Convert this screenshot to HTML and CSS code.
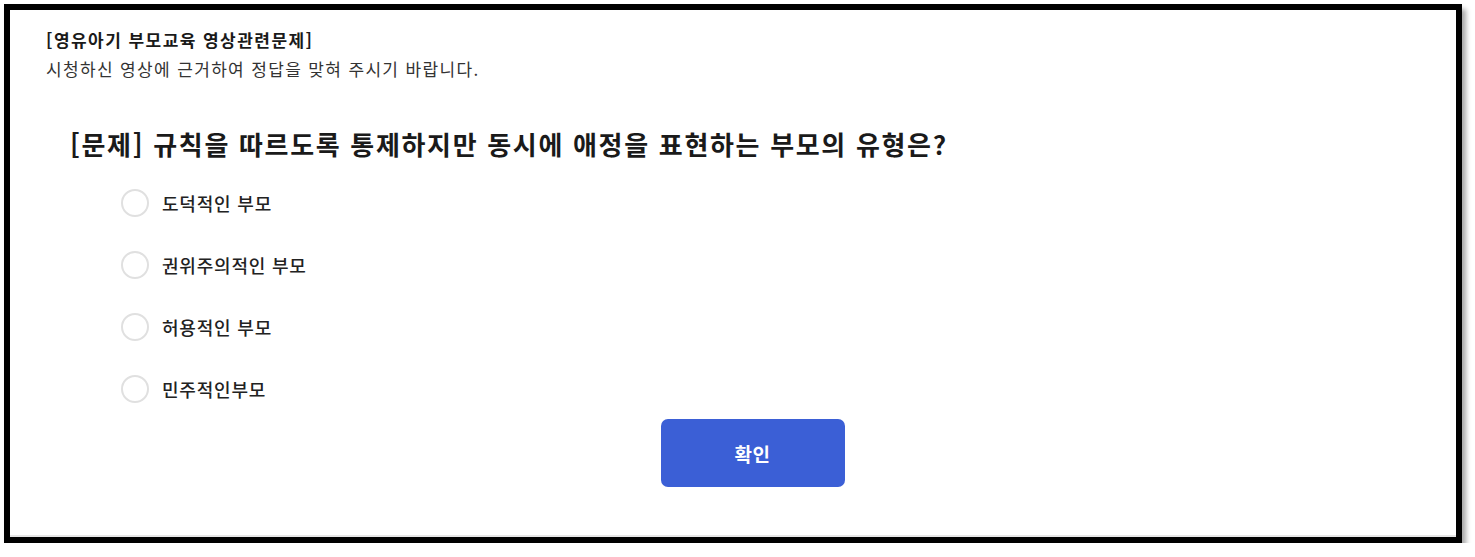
FILE: index.html
```html
<!DOCTYPE html>
<html lang="ko">
<head>
<meta charset="utf-8">
<link rel="stylesheet" href="styles.css">
</head>
<body>
<div class="frame">
  <div class="inner">
    <div class="header">
      <div class="title">[영유아기 부모교육 영상관련문제]</div>
      <div class="subtitle">시청하신 영상에 근거하여 정답을 맞혀 주시기 바랍니다.</div>
    </div>
    <div class="question">[문제] 규칙을 따르도록 통제하지만 동시에 애정을 표현하는 부모의 유형은?</div>
    <ul class="options">
      <li class="option"><span class="radio"></span><span class="label">도덕적인 부모</span></li>
      <li class="option"><span class="radio"></span><span class="label">권위주의적인 부모</span></li>
      <li class="option"><span class="radio"></span><span class="label">허용적인 부모</span></li>
      <li class="option"><span class="radio"></span><span class="label">민주적인부모</span></li>
    </ul>
    <div class="actions">
      <button class="btn">확인</button>
    </div>
  </div>
</div>
</body>
</html>
```

FILE: styles.css
```css
* { box-sizing: border-box; }
html, body { margin: 0; padding: 0; background: #fff; }
body {
  font-family: "Noto Sans CJK KR", "Noto Sans", sans-serif;
  color: #222;
}
.frame {
  margin: 4px 0 0 4px;
  width: 1458px;
  height: 539px;
  border: 6px solid #000;
  box-shadow: 4px 5px 5px rgba(0,0,0,0.35);
  background: #fff;
}
.inner {
  height: 100%;
  border-bottom: 2px solid #e6e6e6;
  padding: 18px 0 0 36px;
  display: flex;
  flex-direction: column;
}
.title {
  font-size: 17px;
  font-weight: 700;
  line-height: 24px;
  letter-spacing: 1.45px;
  color: #1a1a1a;
}
.subtitle {
  margin-top: 5px;
  font-size: 17px;
  line-height: 24px;
  letter-spacing: 1.35px;
  color: #333;
}
.question {
  margin: 45px 0 0 24px;
  font-size: 26px;
  font-weight: 700;
  line-height: 36px;
  letter-spacing: 1.68px;
  color: #1a1a1a;
}
.options {
  list-style: none;
  margin: 27px 0 0 75px;
  padding: 0;
  display: flex;
  flex-direction: column;
  gap: 34px;
}
.option {
  display: flex;
  align-items: center;
  gap: 13px;
  height: 28px;
}
.radio {
  width: 28px;
  height: 28px;
  border-radius: 50%;
  border: 2px solid #e0e0e0;
  background: #fff;
}
.label {
  font-size: 18px;
  font-weight: 500;
  letter-spacing: 0.8px;
  color: #222;
}
.actions {
  display: flex;
  justify-content: center;
  margin-top: 16px;
  padding-left: 3px;
}
.btn {
  width: 184px;
  height: 68px;
  border: none;
  border-radius: 7px;
  background: #3b5fd6;
  color: #fff;
  font-family: inherit;
  font-size: 19px;
  font-weight: 700;
  letter-spacing: 0.5px;
}
```
